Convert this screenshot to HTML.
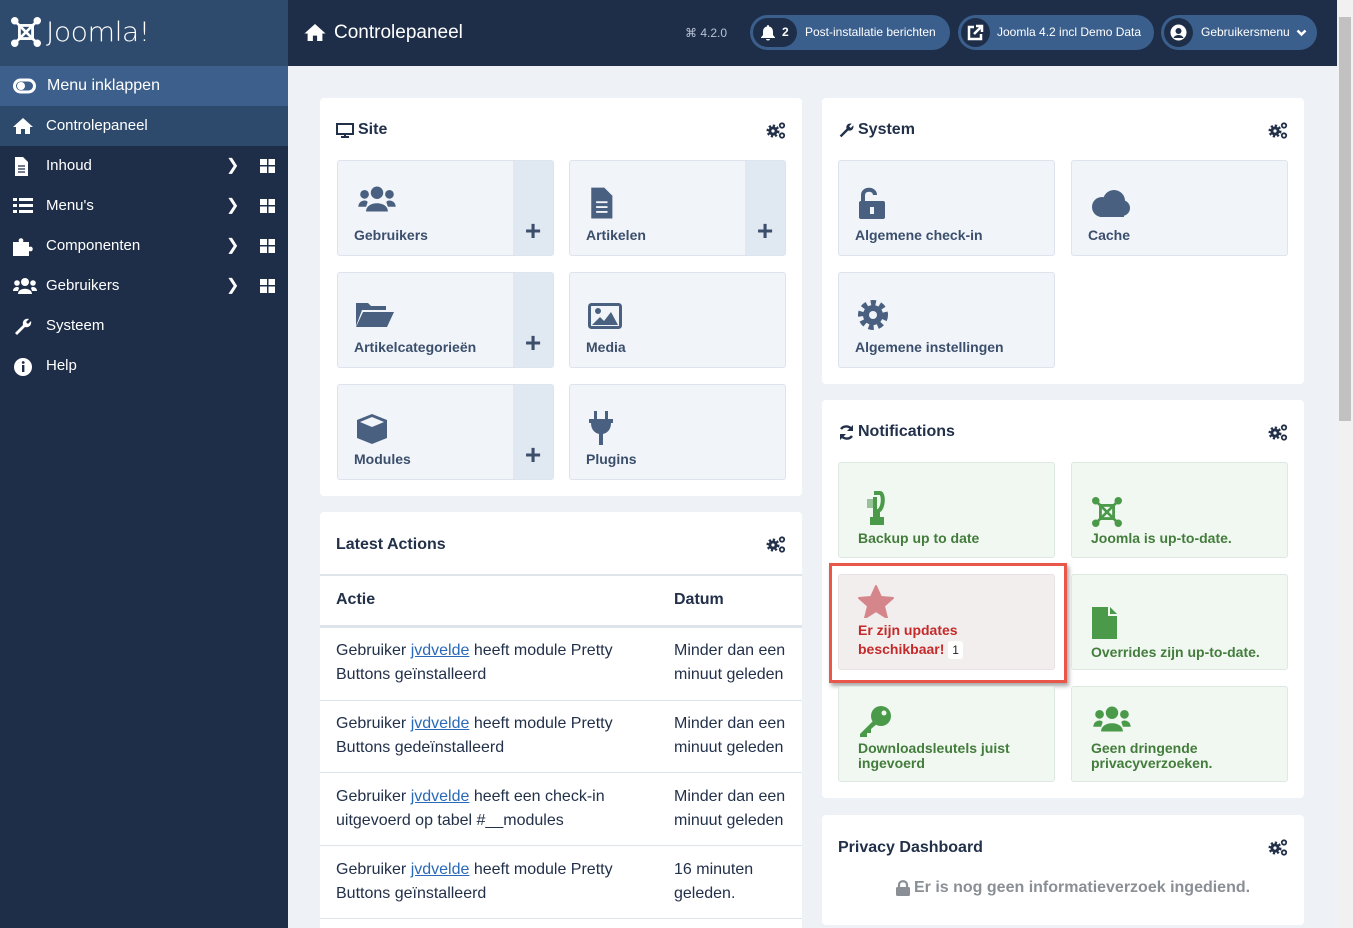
<!DOCTYPE html>
<html><head><meta charset="utf-8"><style>
*{box-sizing:border-box;margin:0;padding:0}
html,body{width:1353px;height:928px;overflow:hidden}
body{background:#eef2f7;font-family:"Liberation Sans",sans-serif;position:relative;color:#22304a}
.abs{position:absolute}
#side{left:0;top:0;width:288px;height:928px;background:#1f2e48}
#logo{left:0;top:0;width:288px;height:66px;background:#2e4a6c}
.mi{position:absolute;left:0;width:288px;height:40px;color:#fff;font-size:15px;line-height:40px;padding-left:46px}
.mi svg{position:absolute;left:13px;top:11px}
.chev{position:absolute;left:226px;top:0;font-size:16px}
.grid{position:absolute;left:260px;top:13px;width:15px;height:14px;background:
linear-gradient(#1f2e48,#1f2e48) 7px 0/1.5px 14px no-repeat,linear-gradient(#1f2e48,#1f2e48) 0 6px/15px 1.5px no-repeat,#fff}
#top{left:288px;top:0;width:1049px;height:66px;background:#1f2e48;color:#fff}
.pill{position:absolute;top:15px;height:35px;border-radius:18px;background:#3b5f8d;color:#fff;font-size:12px;line-height:35px}
.pill .c{position:absolute;left:3px;top:3px;width:29px;height:29px;border-radius:50%;background:#1f2e48}
.card{position:absolute;background:#fff;border-radius:4px;overflow:hidden}
.ct{position:absolute;left:16px;top:23px;font-size:16px;font-weight:bold;color:#22304a}
.gear{position:absolute;right:16px;top:24px}
.tile{position:absolute;width:217px;height:96px;background:#f1f4f9;border:1px solid #dde4ee;border-radius:3px}
.tile .l{position:absolute;left:16px;top:66px;font-size:14px;font-weight:bold;color:#3b4f6c}
.tile .ic{position:absolute;left:18px;top:24px}
.plus{position:absolute;right:0;top:0;width:40px;height:94px;background:#e0e8f2;font-size:28px;color:#3b4f6c;text-align:center;line-height:140px;font-weight:bold}
.nt{position:absolute;width:217px;height:96px;background:#f1f7f1;border:1px solid #dde8e0;border-radius:3px}
.nt .l{position:absolute;left:19px;font-size:14px;font-weight:bold;color:#437d3c;line-height:15px}
</style></head><body>
<svg width="0" height="0" style="position:absolute"><defs>
<g id="gears"><circle cx="7" cy="9" r="5.3" fill="none" stroke="#22304a" stroke-width="2.4" stroke-dasharray="2.2 1.9"/><circle cx="7" cy="9" r="4.6" fill="#22304a"/><circle cx="7" cy="9" r="1.6" fill="#fff"/><circle cx="16" cy="3.5" r="2.2" fill="none" stroke="#22304a" stroke-width="1.8"/><circle cx="16" cy="13.5" r="2.2" fill="none" stroke="#22304a" stroke-width="1.8"/></g>
</defs></svg>
<div id="side" class="abs"></div>
<div id="logo" class="abs">
<svg class="abs" style="left:11px;top:17px" width="30" height="30" viewBox="0 0 32 32" fill="#fff"><circle cx="4" cy="4" r="4"/><circle cx="28" cy="4" r="4"/><circle cx="4" cy="28" r="4"/><circle cx="28" cy="28" r="4"/><path d="M5 7 L25 27 L27 25 L7 5Z M25 5 L5 25 L7 27 L27 7Z" /><rect x="9" y="9" width="14" height="14" fill="none" stroke="#fff" stroke-width="3"/></svg>
<div class="abs" style="left:46px;top:17px;color:#fff;font-size:27px;font-family:'DejaVu Sans','Liberation Sans',sans-serif;font-weight:200;letter-spacing:-0.5px;transform:scaleX(1.05);transform-origin:left">Joomla!</div>
</div>
<div class="mi" style="top:66px;background:#3d5f8b;font-size:16px;padding-left:47px"><svg width="24" height="18" viewBox="0 0 24 18"><rect x="1.5" y="3" width="20" height="12" rx="6" fill="none" stroke="#fff" stroke-width="3"/><circle cx="8" cy="9" r="4" fill="#fff"/></svg>Menu inklappen</div>
<div class="mi" style="top:106px;background:#2d4a6d"><svg width="20" height="18" viewBox="0 0 20 18" fill="#fff"><path d="M10 1 L0 10 H3 V17 H8 V12 H12 V17 H17 V10 H20Z"/></svg>Controlepaneel</div>
<div class="mi" style="top:146px"><svg width="16" height="19" viewBox="0 0 16 19" fill="#fff"><path d="M2 0H10L15 5V19H2Z"/><path d="M5 9H12M5 12H12M5 15H12" stroke="#1f2e48" stroke-width="1.2"/></svg>Inhoud<span class="chev">❯</span><span class="grid"></span></div>
<div class="mi" style="top:186px"><svg width="20" height="18" viewBox="0 0 20 18" fill="#fff"><rect x="0" y="1" width="4" height="3"/><rect x="0" y="7" width="4" height="3"/><rect x="0" y="13" width="4" height="3"/><rect x="6" y="1" width="14" height="3"/><rect x="6" y="7" width="14" height="3"/><rect x="6" y="13" width="14" height="3"/></svg>Menu's<span class="chev">❯</span><span class="grid"></span></div>
<div class="mi" style="top:226px"><svg width="22" height="19" viewBox="0 0 22 19" fill="#fff"><path d="M0 5H6C4 0 12 0 10 5H16V10C21 8 21 16 16 14V19H0Z"/></svg>Componenten<span class="chev">❯</span><span class="grid"></span></div>
<div class="mi" style="top:266px"><svg width="24" height="18" viewBox="0 0 24 18" fill="#fff"><circle cx="12" cy="5" r="4"/><circle cx="4" cy="6" r="2.8"/><circle cx="20" cy="6" r="2.8"/><path d="M5 17C5 10 19 10 19 17Z M0 14C0 10 5 9 6 11L5 14Z M24 14C24 10 19 9 18 11L19 14Z"/></svg>Gebruikers<span class="chev">❯</span><span class="grid"></span></div>
<div class="mi" style="top:306px"><svg width="20" height="20" viewBox="0 0 20 20" fill="#fff"><path d="M2 16 L10 8 C9 4 12 1 16 2 L13 5 L15 7 L18 4 C19 8 16 11 12 10 L4 18Z"/></svg>Systeem</div>
<div class="mi" style="top:346px"><svg width="20" height="20" viewBox="0 0 20 20"><circle cx="10" cy="10" r="9" fill="#fff"/><rect x="9" y="8" width="2.4" height="7" fill="#1f2e48"/><circle cx="10.2" cy="5.5" r="1.4" fill="#1f2e48"/></svg>Help</div>

<div id="top" class="abs">
<svg class="abs" style="left:16px;top:23px" width="22" height="19" viewBox="0 0 20 18" fill="#fff"><path d="M10 1 L0 10 H3 V17 H8 V12 H12 V17 H17 V10 H20Z"/></svg>
<div class="abs" style="left:46px;top:22px;font-size:19px">Controlepaneel</div>
<div class="abs" style="left:397px;top:26px;font-size:12px;color:#b8c3d3">⌘ 4.2.0</div>
<div class="pill" style="left:462px;width:200px"><span class="c" style="width:44px;border-radius:15px"></span><svg class="abs" style="left:11px;top:10px" width="14" height="16" viewBox="0 0 14 16" fill="#fff"><path d="M7 0C8 0 8 1 8 1.5C11 2 12 4.5 12 7V10L14 12.5V13H0V12.5L2 10V7C2 4.5 3 2 6 1.5C6 1 6 0 7 0Z"/><path d="M5 14H9C9 16 5 16 5 14Z"/></svg><span class="abs" style="left:32px;font-weight:bold">2</span><span class="abs" style="left:55px">Post-installatie berichten</span></div>
<div class="pill" style="left:670px;width:196px"><span class="c"></span><svg class="abs" style="left:9px;top:9px" width="17" height="17" viewBox="0 0 17 17" fill="none" stroke="#fff" stroke-width="2.5"><path d="M7 3H2V15H14V10M9 2H15V8M15 2L7 10"/></svg><span class="abs" style="left:39px">Joomla 4.2 incl Demo Data</span></div>
<div class="pill" style="left:873px;width:156px"><span class="c"></span><svg class="abs" style="left:9px;top:9px" width="17" height="17" viewBox="0 0 17 17"><circle cx="8.5" cy="8.5" r="8" fill="#fff"/><circle cx="8.5" cy="7" r="3" fill="#1f2e48"/><path d="M3.5 14C5 10 12 10 13.5 14Z" fill="#1f2e48"/></svg><span class="abs" style="left:40px">Gebruikersmenu</span><svg class="abs" style="left:135px;top:14px" width="11" height="8" viewBox="0 0 11 8"><path d="M1.5 1.5L5.5 5.5L9.5 1.5" fill="none" stroke="#fff" stroke-width="2.5"/></svg></div>
</div>
<div class="abs" style="left:1337px;top:0;width:16px;height:928px;background:#f1f1f1"><div class="abs" style="left:2px;top:17px;width:12px;height:404px;background:#c1c1c1"></div></div>

<!-- Site card -->
<div class="card" style="left:320px;top:98px;width:482px;height:398px">
<svg class="abs" style="left:16px;top:25px" width="18" height="15" viewBox="0 0 18 15" fill="none" stroke="#22304a" stroke-width="2"><rect x="1" y="1" width="16" height="10"/><path d="M5 14H13M9 11V14"/></svg>
<div class="ct" style="left:38px">Site</div>
<svg class="gear" width="20" height="17" viewBox="0 0 20 17"><use href="#gears"/></svg>
<div class="tile" style="left:17px;top:62px"><svg class="ic" width="42" height="28" viewBox="0 0 24 18" fill="#4a6080"><circle cx="12" cy="5" r="4"/><circle cx="4" cy="6" r="2.8"/><circle cx="20" cy="6" r="2.8"/><path d="M5 17C5 10 19 10 19 17Z M0 14C0 10 5 9 6 11L5 14Z M24 14C24 10 19 9 18 11L19 14Z"/></svg><div class="l">Gebruikers</div><div class="plus">+</div></div>
<div class="tile" style="left:249px;top:62px"><svg class="ic" width="26" height="32" viewBox="0 0 16 19" fill="#4a6080" style="left:18px;top:26px"><path d="M2 0H10L15 5V19H2Z"/><path d="M5 9H12M5 12H12M5 15H12" stroke="#f1f4f9" stroke-width="1.2"/></svg><div class="l">Artikelen</div><div class="plus">+</div></div>
<div class="tile" style="left:17px;top:174px"><svg class="ic" width="38" height="28" viewBox="0 0 38 28" fill="#4a6080" style="top:28px"><path d="M0 2H12L15 5H30V9H6L0 25Z M7 11H38L31 26H0Z"/></svg><div class="l">Artikelcategorieën</div><div class="plus">+</div></div>
<div class="tile" style="left:249px;top:174px"><svg class="ic" width="34" height="26" viewBox="0 0 34 26" style="top:30px"><rect x="1.5" y="1.5" width="31" height="23" rx="2" fill="none" stroke="#4a6080" stroke-width="3"/><circle cx="10" cy="8" r="3" fill="#4a6080"/><path d="M4 22L12 14L16 18L23 9L30 22Z" fill="#4a6080"/></svg><div class="l">Media</div></div>
<div class="tile" style="left:17px;top:286px"><svg class="ic" width="32" height="32" viewBox="0 0 32 32" style="top:28px"><path d="M16 1L31 7V25L16 31L1 25V7Z" fill="#4a6080"/><path d="M4 9L16 14L28 9L16 4Z" fill="#f1f4f9"/></svg><div class="l">Modules</div><div class="plus">+</div></div>
<div class="tile" style="left:249px;top:286px"><svg class="ic" width="26" height="34" viewBox="0 0 26 34" fill="#4a6080" style="top:26px"><rect x="6" y="0" width="3" height="8"/><rect x="17" y="0" width="3" height="8"/><path d="M1 8H25V12H23C23 19 19 22 15 23V34H11V23C7 22 3 19 3 12H1Z"/></svg><div class="l">Plugins</div></div>
</div>

<!-- Latest actions -->
<div class="card" style="left:320px;top:512px;width:482px;height:430px">
<div class="ct" style="top:24px">Latest Actions</div>
<svg class="gear" width="20" height="17" viewBox="0 0 20 17" style="top:24px"><use href="#gears"/></svg>
<div class="abs" style="left:0;top:62px;width:482px;height:2px;background:#dfe3ea"></div>
<div class="abs" style="left:16px;top:79px;font-size:16px;font-weight:bold">Actie</div>
<div class="abs" style="left:354px;top:79px;font-size:16px;font-weight:bold">Datum</div>
<div class="abs" style="left:0;top:113px;width:482px;height:3px;background:#dfe3ea"></div>
<div class="abs" style="left:16px;top:127px;font-size:16px;line-height:24px;color:#22304a;width:320px">Gebruiker <u style="color:#2a69b8">jvdvelde</u> heeft module Pretty Buttons geïnstalleerd</div>
<div class="abs" style="left:354px;top:127px;font-size:16px;line-height:24px;width:120px">Minder dan een minuut geleden</div>
<div class="abs" style="left:0;top:188px;width:482px;height:1px;background:#dfe3ea"></div>
<div class="abs" style="left:16px;top:200px;font-size:16px;line-height:24px;width:320px">Gebruiker <u style="color:#2a69b8">jvdvelde</u> heeft module Pretty Buttons gedeïnstalleerd</div>
<div class="abs" style="left:354px;top:200px;font-size:16px;line-height:24px;width:120px">Minder dan een minuut geleden</div>
<div class="abs" style="left:0;top:260px;width:482px;height:1px;background:#dfe3ea"></div>
<div class="abs" style="left:16px;top:273px;font-size:16px;line-height:24px;width:320px">Gebruiker <u style="color:#2a69b8">jvdvelde</u> heeft een check-in uitgevoerd op tabel #__modules</div>
<div class="abs" style="left:354px;top:273px;font-size:16px;line-height:24px;width:120px">Minder dan een minuut geleden</div>
<div class="abs" style="left:0;top:333px;width:482px;height:1px;background:#dfe3ea"></div>
<div class="abs" style="left:16px;top:346px;font-size:16px;line-height:24px;width:320px">Gebruiker <u style="color:#2a69b8">jvdvelde</u> heeft module Pretty Buttons geïnstalleerd</div>
<div class="abs" style="left:354px;top:346px;font-size:16px;line-height:24px;width:120px">16 minuten geleden.</div>
<div class="abs" style="left:0;top:406px;width:482px;height:1px;background:#dfe3ea"></div>
</div>

<!-- System -->
<div class="card" style="left:822px;top:98px;width:482px;height:286px">
<svg class="abs" style="left:16px;top:24px" width="17" height="17" viewBox="0 0 20 20" fill="#22304a"><path d="M2 16 L10 8 C9 4 12 1 16 2 L13 5 L15 7 L18 4 C19 8 16 11 12 10 L4 18Z"/></svg>
<div class="ct" style="left:36px">System</div>
<svg class="gear" width="20" height="17" viewBox="0 0 20 17"><use href="#gears"/></svg>
<div class="tile" style="left:16px;top:62px"><svg class="ic" width="30" height="33" viewBox="0 0 30 33" style="top:26px"><path d="M6 14V8C6 1 18 1 18 8" fill="none" stroke="#4a6080" stroke-width="4"/><rect x="2" y="14" width="26" height="18" rx="2" fill="#4a6080"/><rect x="13" y="20" width="4" height="7" fill="#f1f4f9"/></svg><div class="l">Algemene check-in</div></div>
<div class="tile" style="left:249px;top:62px"><svg class="ic" width="40" height="28" viewBox="0 0 40 28" fill="#4a6080" style="top:28px"><circle cx="12" cy="18" r="10"/><circle cx="24" cy="12" r="11"/><circle cx="32" cy="19" r="8"/><rect x="10" y="18" width="24" height="10"/></svg><div class="l">Cache</div></div>
<div class="tile" style="left:16px;top:174px"><svg class="ic" width="32" height="32" viewBox="0 0 32 32" style="top:26px"><circle cx="16" cy="16" r="12" fill="none" stroke="#4a6080" stroke-width="6" stroke-dasharray="5 4"/><circle cx="16" cy="16" r="10" fill="#4a6080"/><circle cx="16" cy="16" r="4" fill="#f1f4f9"/></svg><div class="l">Algemene instellingen</div></div>
</div>

<!-- Notifications -->
<div class="card" style="left:822px;top:400px;width:482px;height:398px;overflow:visible">
<svg class="abs" style="left:16px;top:24px" width="17" height="17" viewBox="0 0 17 17" fill="none" stroke="#22304a" stroke-width="2.4"><path d="M14 6A6.5 6.5 0 0 0 3 5M3 11A6.5 6.5 0 0 0 14 12"/><path d="M15 1V7H9Z M2 16V10H8Z" fill="#22304a" stroke="none"/></svg>
<div class="ct" style="left:36px">Notifications</div>
<svg class="gear" width="20" height="17" viewBox="0 0 20 17"><use href="#gears"/></svg>
<div class="nt" style="left:16px;top:62px"><svg class="abs" style="left:25px;top:28px" width="22" height="34" viewBox="0 0 22 34"><path d="M10 2H16C20 2 20 18 14 20V28H18V32H8V28H11V6" fill="none" stroke="#4a9a4a" stroke-width="4"/><rect x="3" y="8" width="6" height="9" fill="#9ac29a"/></svg><div class="l" style="top:68px">Backup up to date</div></div>
<div class="nt" style="left:249px;top:62px"><svg class="abs" style="left:20px;top:34px" width="30" height="30" viewBox="0 0 32 32" fill="#4a9a4a"><circle cx="4" cy="4" r="4"/><circle cx="28" cy="4" r="4"/><circle cx="4" cy="28" r="4"/><circle cx="28" cy="28" r="4"/><path d="M5 7 L25 27 L27 25 L7 5Z M25 5 L5 25 L7 27 L27 7Z"/><rect x="9" y="9" width="14" height="14" fill="none" stroke="#4a9a4a" stroke-width="3"/></svg><div class="l" style="top:68px">Joomla is up-to-date.</div></div>
<div class="abs" style="left:7px;top:163px;width:238px;height:120px;border:3px solid #e8574a;box-shadow:2px 3px 4px rgba(0,0,0,.35)"></div>
<div class="nt" style="left:16px;top:174px;background:#f2eeee;border-color:#e8e2e4"><svg class="abs" style="left:19px;top:10px" width="36" height="33" viewBox="0 0 36 33"><path d="M18 1L23 12L35 13L26 21L29 33L18 26L7 33L10 21L1 13L13 12Z" fill="#d5868a" stroke="#d5868a" stroke-linejoin="round" stroke-width="2"/></svg><div class="l" style="top:46px;color:#c52a2a;line-height:19px">Er zijn updates<br>beschikbaar! <span style="background:#fff;color:#222;font-weight:normal;font-size:12px;padding:2px 4px;border-radius:3px">1</span></div></div>
<div class="nt" style="left:249px;top:174px"><svg class="abs" style="left:20px;top:32px" width="25" height="32" viewBox="0 0 25 32" fill="#4a9a4a"><path d="M0 0H16V9H25V32H0Z"/><path d="M18 0L25 7H18Z"/></svg><div class="l" style="top:70px">Overrides zijn up-to-date.</div></div>
<div class="nt" style="left:16px;top:286px"><svg class="abs" style="left:20px;top:18px" width="33" height="32" viewBox="0 0 33 32"><circle cx="22" cy="11" r="10" fill="#4a9a4a"/><circle cx="25" cy="8" r="2.5" fill="#f1f7f1"/><path d="M15 15L1 29V32H8V28H12V24L19 18Z" fill="#4a9a4a"/></svg><div class="l" style="top:54px">Downloadsleutels juist<br>ingevoerd</div></div>
<div class="nt" style="left:249px;top:286px"><svg class="abs" style="left:20px;top:18px" width="40" height="28" viewBox="0 0 24 18" fill="#4a9a4a"><circle cx="12" cy="5" r="4"/><circle cx="4" cy="6" r="2.8"/><circle cx="20" cy="6" r="2.8"/><path d="M5 17C5 10 19 10 19 17Z M0 14C0 10 5 9 6 11L5 14Z M24 14C24 10 19 9 18 11L19 14Z"/></svg><div class="l" style="top:54px">Geen dringende<br>privacyverzoeken.</div></div>
</div>

<!-- Privacy -->
<div class="card" style="left:822px;top:815px;width:482px;height:110px">
<div class="ct" style="top:24px">Privacy Dashboard</div>
<svg class="gear" width="20" height="17" viewBox="0 0 20 17" style="top:24px"><use href="#gears"/></svg>
<svg class="abs" style="left:74px;top:65px" width="14" height="16" viewBox="0 0 14 16"><path d="M3 7V5C3 0 11 0 11 5V7" fill="none" stroke="#8a8f96" stroke-width="2.2"/><rect x="0" y="7" width="14" height="9" rx="1.5" fill="#8a8f96"/></svg>
<div class="abs" style="left:92px;top:64px;font-size:16px;font-weight:bold;color:#8a8f96">Er is nog geen informatieverzoek ingediend.</div>
</div>
</body></html>
